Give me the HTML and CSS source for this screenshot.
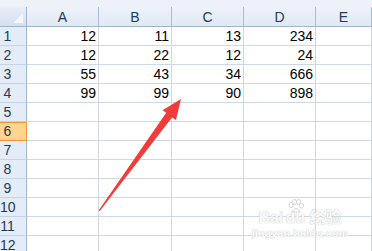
FILE: index.html
```html
<!DOCTYPE html>
<html lang="zh">
<head>
    <meta charset="UTF-8">
    <title>Sheet1</title>
    <link rel="stylesheet" href="styles.css">
</head>
<body>
    <div class="bar"></div>

    <div class="sheet">
        <div class="corner"></div>
        <div class="ch">A</div>
        <div class="ch">B</div>
        <div class="ch">C</div>
        <div class="ch">D</div>
        <div class="ch">E</div>

        <div class="rh">1</div><div class="c">12</div><div class="c">11</div><div class="c">13</div><div class="c">234</div><div class="c"></div>
        <div class="rh">2</div><div class="c">12</div><div class="c">22</div><div class="c">12</div><div class="c">24</div><div class="c"></div>
        <div class="rh">3</div><div class="c">55</div><div class="c">43</div><div class="c">34</div><div class="c">666</div><div class="c"></div>
        <div class="rh">4</div><div class="c">99</div><div class="c">99</div><div class="c">90</div><div class="c">898</div><div class="c"></div>
        <div class="rh">5</div><div class="c"></div><div class="c"></div><div class="c"></div><div class="c"></div><div class="c"></div>
        <div class="rh active">6</div><div class="c"></div><div class="c"></div><div class="c"></div><div class="c"></div><div class="c"></div>
        <div class="rh">7</div><div class="c"></div><div class="c"></div><div class="c"></div><div class="c"></div><div class="c"></div>
        <div class="rh">8</div><div class="c"></div><div class="c"></div><div class="c"></div><div class="c"></div><div class="c"></div>
        <div class="rh">9</div><div class="c"></div><div class="c"></div><div class="c"></div><div class="c"></div><div class="c"></div>
        <div class="rh">10</div><div class="c"></div><div class="c"></div><div class="c"></div><div class="c"></div><div class="c"></div>
        <div class="rh">11</div><div class="c"></div><div class="c"></div><div class="c"></div><div class="c"></div><div class="c"></div>
        <div class="rh">12</div><div class="c"></div><div class="c"></div><div class="c"></div><div class="c"></div><div class="c"></div>
    </div>

    <!-- Strzałka narysowana na arkuszu -->
    <svg class="arrow" width="372" height="251" viewBox="0 0 372 251">
        <polygon points="181,99 176,120 172,117.5 99.6,211.3 98.6,210.6 166.2,112.8 162.5,110.2" fill="#f23b3b"/>
    </svg>

    <!-- Znak wodny -->
    <div class="mark">
        <svg class="paw" width="18" height="15" viewBox="0 0 18 15">
            <g fill="#fff" stroke="#d4d4d4" stroke-width="1">
                <ellipse cx="4" cy="6" rx="2" ry="2.6"/>
                <ellipse cx="7.5" cy="3" rx="2" ry="2.6"/>
                <ellipse cx="11.5" cy="3" rx="2" ry="2.6"/>
                <ellipse cx="14.5" cy="6.5" rx="2" ry="2.6"/>
                <path d="M5 13 Q9 6 13 13 Z"/>
            </g>
        </svg>
        <div class="mark-title">Bai<span class="du">du</span> 经验</div>
        <div class="mark-url">jingyan.baidu.com</div>
    </div>
</body>
</html>
```

FILE: styles.css
```css
body {
    margin: 0;
    width: 372px;
    height: 251px;
    overflow: hidden;
    background-color: #fff;
    font-family: "Liberation Sans", Arial, sans-serif;
    font-size: 14px;
    position: relative;
}
.bar {
    height: 7px;
    background-color: #edf2f9;
}
.sheet {
    display: grid;
    grid-template-columns: 27px 72px 73px 72px 72px 56px;
    grid-template-rows: 20px;
    grid-auto-rows: 19px;
}
.sheet > div {
    box-sizing: border-box;
    border-right: 1px solid #d0d7e5;
    border-bottom: 1px solid #d0d7e5;
}

/* Nagłówki kolumn i wierszy */
.corner {
    position: relative;
    background: linear-gradient(#e7eef8, #d5e0ee);
    border-color: #9eb6ce !important;
}
.corner::after {
    content: "";
    position: absolute;
    right: 3px;
    bottom: 3px;
    border-left: 10px solid transparent;
    border-bottom: 10px solid #f3f6fa;
}
.ch {
    background: linear-gradient(#eef3f9, #e0e8f3);
    border-right-color: #a9bdd5 !important;
    border-bottom-color: #9eb6ce !important;
    text-align: center;
    color: #243b55;
    padding-top: 2px;
    line-height: 17px;
}
.rh {
    background-color: #e4ecf7;
    border-right-color: #9eb6ce !important;
    border-bottom-color: #c5d3e6 !important;
    color: #243b55;
    text-align: center;
    padding-right: 11px;
    padding-top: 1px;
    line-height: 17px;
}
.rh.active {
    background-color: #ffd58f;
    border-right-color: #f29536 !important;
    border-bottom-color: #f29536 !important;
    box-shadow: inset 0 1px 0 #f29536;
}

/* Komórki */
.c {
    text-align: right;
    padding-right: 2px;
    padding-top: 1px;
    line-height: 17px;
    color: #000;
}

.arrow {
    position: absolute;
    left: 0;
    top: 0;
}

/* Znak wodny Baidu */
.mark {
    position: absolute;
    left: 250px;
    top: 199px;
    width: 100px;
    color: #fafafa;
    text-align: center;
    white-space: nowrap;
    font-family: "Liberation Sans", "Noto Sans CJK SC", sans-serif;
}
.paw {
    position: absolute;
    left: 37px;
    top: 0;
}
.mark-title {
    margin-top: 10px;
    font-size: 16px;
    font-weight: bold;
    line-height: 18px;
    text-shadow: 0 0 1px #c8c8c8, 0 0 1px #c8c8c8;
}
.du {
    margin-left: 2px;
}
.mark-url {
    font-size: 11px;
    font-weight: bold;
    line-height: 13px;
    text-shadow: 0 0 1px #cfcfcf, 0 0 1px #cfcfcf;
}
```
